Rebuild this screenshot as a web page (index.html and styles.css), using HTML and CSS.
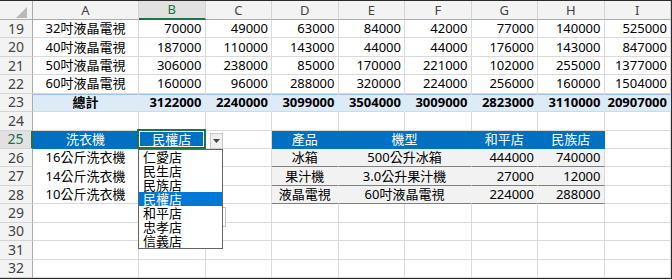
FILE: index.html
```html
<!DOCTYPE html>
<html lang="zh-Hant">
<head>
    <meta charset="UTF-8">
    <meta name="viewport" content="width=device-width, initial-scale=1.0">
    <title>樞紐分析 - 工作表</title>
    <link rel="stylesheet" href="styles.css">
</head>
<body>
    <div class="sheet">
        <!-- column headers -->
        <div class="corner">
            <svg width="33" height="19" viewBox="0 0 33 19"><polygon points="27,6 27,17 16,17" fill="#b9b9b9"/></svg>
        </div>
        <div class="hd">A</div>
        <div class="hd on">B</div>
        <div class="hd">C</div>
        <div class="hd">D</div>
        <div class="hd">E</div>
        <div class="hd">F</div>
        <div class="hd">G</div>
        <div class="hd">H</div>
        <div class="hd">I</div>

        <!-- row 19 -->
        <div class="rh">19</div>
        <div class="c t">32吋液晶電視</div>
        <div class="c n">70000</div>
        <div class="c n">49000</div>
        <div class="c n">63000</div>
        <div class="c n">84000</div>
        <div class="c n">42000</div>
        <div class="c n">77000</div>
        <div class="c n">140000</div>
        <div class="c n">525000</div>

        <!-- row 20 -->
        <div class="rh">20</div>
        <div class="c t">40吋液晶電視</div>
        <div class="c n">187000</div>
        <div class="c n">110000</div>
        <div class="c n">143000</div>
        <div class="c n">44000</div>
        <div class="c n">44000</div>
        <div class="c n">176000</div>
        <div class="c n">143000</div>
        <div class="c n">847000</div>

        <!-- row 21 -->
        <div class="rh">21</div>
        <div class="c t">50吋液晶電視</div>
        <div class="c n">306000</div>
        <div class="c n">238000</div>
        <div class="c n">85000</div>
        <div class="c n">170000</div>
        <div class="c n">221000</div>
        <div class="c n">102000</div>
        <div class="c n">255000</div>
        <div class="c n">1377000</div>

        <!-- row 22 -->
        <div class="rh">22</div>
        <div class="c t">60吋液晶電視</div>
        <div class="c n">160000</div>
        <div class="c n">96000</div>
        <div class="c n">288000</div>
        <div class="c n">320000</div>
        <div class="c n">224000</div>
        <div class="c n">256000</div>
        <div class="c n">160000</div>
        <div class="c n">1504000</div>

        <!-- row 23: totals -->
        <div class="rh">23</div>
        <div class="c t tot">總計</div>
        <div class="c n tot">3122000</div>
        <div class="c n tot">2240000</div>
        <div class="c n tot">3099000</div>
        <div class="c n tot">3504000</div>
        <div class="c n tot">3009000</div>
        <div class="c n tot">2823000</div>
        <div class="c n tot">3110000</div>
        <div class="c n tot">20907000</div>

        <!-- row 24 -->
        <div class="rh">24</div>
        <div class="c"></div><div class="c"></div><div class="c"></div><div class="c"></div>
        <div class="c"></div><div class="c"></div><div class="c"></div><div class="c"></div><div class="c"></div>

        <!-- row 25 -->
        <div class="rh on">25</div>
        <div class="c t blue">洗衣機</div>
        <div class="c t blue sel">民權店</div>
        <div class="c"></div>
        <div class="c t blue">產品</div>
        <div class="c t blue span2">機型</div>
        <div class="c t blue">和平店</div>
        <div class="c t blue">民族店</div>
        <div class="c"></div>

        <!-- row 26 -->
        <div class="rh">26</div>
        <div class="c t wh">16公斤洗衣機</div>
        <div class="c"></div>
        <div class="c"></div>
        <div class="c t band">冰箱</div>
        <div class="c t band span2">500公升冰箱</div>
        <div class="c n band">444000</div>
        <div class="c n band last">740000</div>
        <div class="c"></div>

        <!-- row 27 -->
        <div class="rh">27</div>
        <div class="c t wh">14公斤洗衣機</div>
        <div class="c"></div>
        <div class="c"></div>
        <div class="c t band">果汁機</div>
        <div class="c t band span2">3.0公升果汁機</div>
        <div class="c n band">27000</div>
        <div class="c n band last">12000</div>
        <div class="c"></div>

        <!-- row 28 -->
        <div class="rh">28</div>
        <div class="c t">10公斤洗衣機</div>
        <div class="c"></div>
        <div class="c"></div>
        <div class="c t band">液晶電視</div>
        <div class="c t band span2">60吋液晶電視</div>
        <div class="c n band">224000</div>
        <div class="c n band last">288000</div>
        <div class="c"></div>

        <!-- rows 29-32 -->
        <div class="rh">29</div>
        <div class="c"></div><div class="c"></div><div class="c"></div><div class="c"></div>
        <div class="c"></div><div class="c"></div><div class="c"></div><div class="c"></div><div class="c"></div>
        <div class="rh">30</div>
        <div class="c"></div><div class="c"></div><div class="c"></div><div class="c"></div>
        <div class="c"></div><div class="c"></div><div class="c"></div><div class="c"></div><div class="c"></div>
        <div class="rh">31</div>
        <div class="c"></div><div class="c"></div><div class="c"></div><div class="c"></div>
        <div class="c"></div><div class="c"></div><div class="c"></div><div class="c"></div><div class="c"></div>
        <div class="rh">32</div>
        <div class="c"></div><div class="c"></div><div class="c"></div><div class="c"></div>
        <div class="c"></div><div class="c"></div><div class="c"></div><div class="c"></div><div class="c"></div>

        <!-- data validation list on B25 -->
        <div class="ghost"></div>
        <div class="dd-btn">
            <svg width="7" height="4" viewBox="0 0 7 4"><polygon points="0,0 7,0 3.5,4" fill="#444"/></svg>
        </div>
        <ul class="dd-list">
            <li>仁愛店</li>
            <li>民生店</li>
            <li>民族店</li>
            <li class="picked">民權店</li>
            <li>和平店</li>
            <li>忠孝店</li>
            <li>信義店</li>
        </ul>
    </div>
</body>
</html>
```

FILE: styles.css
```css
body {
    margin: 0;
    background: #fff;
    font-family: "Noto Sans", "Noto Sans CJK TC", sans-serif;
    font-size: 13px;
    color: #000;
}

.sheet {
    position: relative;
    display: grid;
    grid-template-columns: 33px 106px repeat(8, 66.5px);
    grid-template-rows: 19px repeat(14, minmax(0, 1fr));
    width: 671px;
    height: 277px;
    line-height: 1;
    border-top: 1px solid #2b2b2b;
    border-right: 1px solid #2b2b2b;
    border-bottom: 1px solid #2b2b2b;
    overflow: hidden;
}

.corner {
    background: #f3f3f3;
    border-right: 1px solid #ababab;
    border-bottom: 1px solid #ababab;
    box-sizing: border-box;
    line-height: 0;
}

.hd {
    display: flex;
    align-items: center;
    justify-content: center;
    background: #f3f3f3;
    color: #444;
    border-right: 1px solid #d4d4d4;
    border-bottom: 1px solid #ababab;
    box-sizing: border-box;
}

.hd.on {
    background: #e1e1e1;
    color: #217346;
    border-bottom: 2px solid #217346;
}

.rh {
    display: flex;
    align-items: center;
    justify-content: center;
    background: #f3f3f3;
    color: #444;
    font-size: 14px;
    border-right: 1px solid #ababab;
    border-bottom: 1px solid #d4d4d4;
    box-sizing: border-box;
}

.rh.on {
    background: #e1e1e1;
    color: #217346;
    border-right: 2px solid #217346;
}

.c {
    display: flex;
    align-items: center;
    padding: 0 3px;
    white-space: nowrap;
    border-right: 1px solid #dadada;
    border-bottom: 1px solid #dadada;
    box-sizing: border-box;
    min-width: 0;
    min-height: 0;
}

.t {
    justify-content: center;
}

.n {
    justify-content: flex-end;
}

.tot {
    background: #ddebf7;
    font-weight: bold;
    border-right-color: #ddebf7;
    border-bottom-color: #c9dcee;
    box-shadow: inset 0 1px 0 #9bc2e6;
}

.blue {
    background: #0070c0;
    color: #fff;
    border-right-color: #0070c0;
    border-bottom-color: #0070c0;
}

.sel {
    position: relative;
}

.sel::after {
    content: "";
    position: absolute;
    left: -2px;
    top: -2px;
    right: -1px;
    bottom: -1px;
    border: 2px solid #217346;
    box-shadow: inset 0 0 0 1px #fff;
}

.span2 {
    grid-column: span 2;
}

.wh {
    border-bottom-color: #fff;
}

.band {
    background: #f2f2f2;
    border-right-color: #f2f2f2;
    border-bottom-color: #808080;
}

.band.last {
    border-right-color: #dadada;
}

.ghost {
    position: absolute;
    left: 204px;
    top: 206px;
    width: 22px;
    height: 20px;
    box-sizing: border-box;
    border: 1px solid #c3c3c3;
    background: #fff;
}

.dd-btn {
    position: absolute;
    left: 210px;
    top: 132px;
    width: 13px;
    height: 16px;
    box-sizing: border-box;
    display: flex;
    align-items: center;
    justify-content: center;
    background: #f0f0f0;
    border: 1px solid #c8c8c8;
}

.dd-list {
    position: absolute;
    left: 138px;
    top: 148px;
    width: 85px;
    margin: 0;
    padding: 0;
    list-style: none;
    background: #fff;
    border: 1px solid #646464;
    box-sizing: border-box;
}

.dd-list li {
    height: 14px;
    line-height: 14px;
    padding-left: 4px;
    font-size: 13px;
}

.dd-list li.picked {
    background: #0078d7;
    color: #fff;
}
```
